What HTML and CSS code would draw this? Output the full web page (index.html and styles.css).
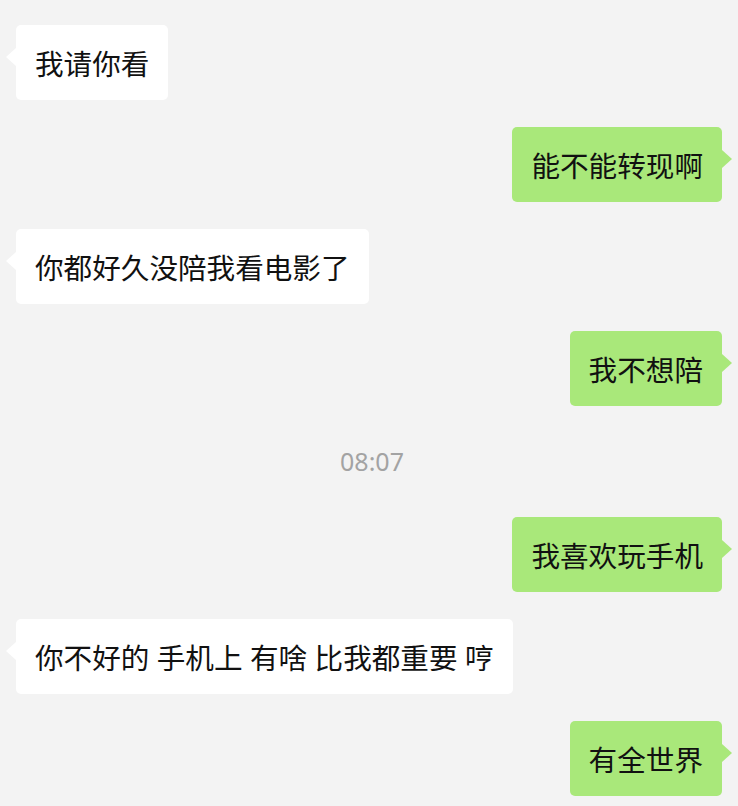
FILE: index.html
```html
<!DOCTYPE html>
<html lang="zh-CN">
<head>
    <meta charset="UTF-8">
    <meta name="viewport" content="width=device-width, initial-scale=1.0">
    <title>聊天记录</title>
    <link rel="stylesheet" href="styles.css">
</head>
<body>
    <main class="chat">
        <div class="msg msg-left"><p class="bubble">我请你看</p></div>
        <div class="msg msg-right"><p class="bubble">能不能转现啊</p></div>
        <div class="msg msg-left"><p class="bubble">你都好久没陪我看电影了</p></div>
        <div class="msg msg-right"><p class="bubble">我不想陪</p></div>
        <div class="time">08:07</div>
        <div class="msg msg-right"><p class="bubble">我喜欢玩手机</p></div>
        <div class="msg msg-left"><p class="bubble">你不好的 手机上 有啥 比我都重要 哼</p></div>
        <div class="msg msg-right"><p class="bubble">有全世界</p></div>
    </main>
</body>
</html>
```

FILE: styles.css
```css
/* Chat screen */
body {
    margin: 0;
    padding: 0;
    background: #f3f3f3;
    font-family: "Noto Sans CJK SC", "Noto Sans", sans-serif;
    color: #111;
}

.chat {
    display: flex;
    flex-direction: column;
    gap: 27px;
    padding: 25px 16px 10px;
}

.msg {
    display: flex;
}

.msg-left {
    justify-content: flex-start;
}

.msg-right {
    justify-content: flex-end;
}

.bubble {
    position: relative;
    margin: 0;
    padding: 17px 19px;
    font-size: 28.6px;
    line-height: 41px;
    word-spacing: 1px;
    border-radius: 5px;
    white-space: pre;
}

.msg-left .bubble {
    background: #fff;
}

.msg-right .bubble {
    background: #a9e87a;
}

/* bubble tails */
.bubble::before {
    content: "";
    position: absolute;
    top: 23px;
    border-top: 9px solid transparent;
    border-bottom: 9px solid transparent;
}

.msg-left .bubble::before {
    left: -10px;
    border-right: 10px solid #fff;
}

.msg-right .bubble::before {
    right: -10px;
    border-left: 10px solid #a9e87a;
}

.time {
    height: 57px;
    line-height: 57px;
    text-align: center;
    font-family: "Noto Sans", sans-serif;
    font-size: 25px;
    color: #a3a3a3;
    padding-left: 6px;
}
```
